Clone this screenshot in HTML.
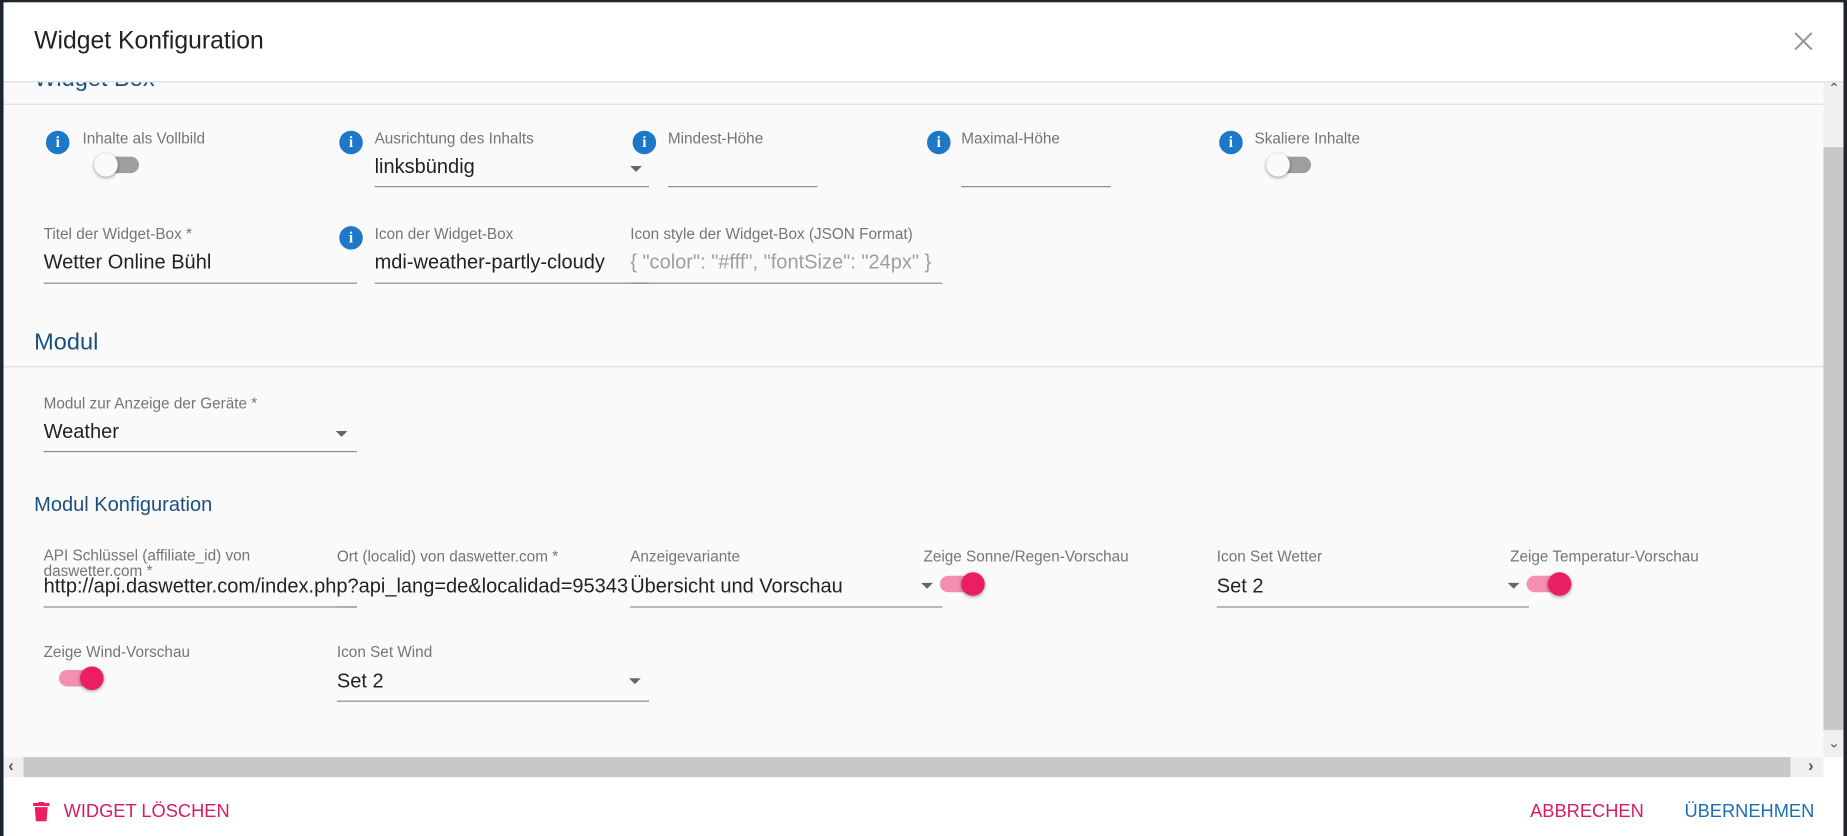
<!DOCTYPE html>
<html><head><meta charset="utf-8"><style>
html,body{margin:0;padding:0;width:1847px;height:836px;overflow:hidden;background:#1c2530;}
#w{position:absolute;left:0;top:0;width:1568px;height:710px;transform:scale(1.17793,1.17746);transform-origin:0 0;font-family:"Liberation Sans",sans-serif;}
.a{position:absolute;white-space:nowrap;}
.lbl{font-size:13px;color:#757575;}
.val{font-size:17px;color:#222;}
.ul{position:absolute;height:1px;background:#8a8a8a;}
.info{position:absolute;width:20px;height:20px;border-radius:50%;background:#1e78c8;color:#fff;font:bold 13px "Liberation Serif",serif;text-align:center;line-height:20px;}
.arr{position:absolute;width:0;height:0;border-left:5px solid transparent;border-right:5px solid transparent;border-top:5px solid #666;}
.soff{position:absolute;width:36px;height:14px;border-radius:7px;background:#9e9e9e;}
.soff::after{content:"";position:absolute;left:-2px;top:-3px;width:20px;height:20px;border-radius:50%;background:#fafafa;box-shadow:0 1px 3px rgba(0,0,0,.4);}
.son{position:absolute;width:36px;height:14px;border-radius:7px;background:#f48fb1;}
.son::after{content:"";position:absolute;left:18px;top:-3px;width:20px;height:20px;border-radius:50%;background:#e91e63;box-shadow:0 1px 3px rgba(0,0,0,.4);}
.h{color:#1b4f7e;}
</style></head><body><div id="w">
<div class="a" style="left:3px;top:2px;width:1562px;height:708px;background:#fff;border-radius:3px 3px 0 0;"></div>
<div class="a" style="left:3px;top:70px;width:1545px;height:573px;background:#fafafa;overflow:hidden;">
  <div class="a h" style="left:26px;top:-14px;font-size:20px;">Widget Box</div>
  <div class="a" style="left:0;top:18px;width:1545px;height:1px;background:#ddd;"></div>
</div>
<div class="a" style="left:3px;top:2px;width:1562px;height:67px;background:#fff;border-bottom:1px solid #ddd;"></div>
<div class="a" style="left:29px;top:23px;font-size:21px;color:#222;">Widget Konfiguration</div>
<svg class="a" style="left:1523px;top:27px;" width="16" height="16" viewBox="0 0 16 16"><path d="M1 1L15 15M15 1L1 15" stroke="#999" stroke-width="1.8"/></svg>
<div class="a" style="left:1548px;top:70px;width:17px;height:573px;background:#f0f0f0;"></div>
<div class="a" style="left:1548px;top:125px;width:17px;height:495px;background:#c8c8c8;"></div>
<div class="a" style="left:1552px;top:68px;font-size:12px;color:#555;">⌃</div>
<div class="a" style="left:1552px;top:624px;font-size:12px;color:#555;">⌄</div>
<div class="info" style="left:39px;top:111px;">i</div>
<div class="a lbl" style="left:70px;top:110px;">Inhalte als Vollbild</div>
<div class="soff" style="left:82px;top:133px;"></div>
<div class="info" style="left:288px;top:111px;">i</div>
<div class="a lbl" style="left:318px;top:110px;">Ausrichtung des Inhalts</div>
<div class="a val" style="left:318px;top:132px;">linksbündig</div>
<div class="arr" style="left:535px;top:141px;"></div>
<div class="ul" style="left:318px;top:158px;width:233px;"></div>
<div class="info" style="left:537px;top:111px;">i</div>
<div class="a lbl" style="left:567px;top:110px;">Mindest-Höhe</div>
<div class="ul" style="left:567px;top:158px;width:127px;"></div>
<div class="info" style="left:787px;top:111px;">i</div>
<div class="a lbl" style="left:816px;top:110px;">Maximal-Höhe</div>
<div class="ul" style="left:816px;top:158px;width:127px;"></div>
<div class="info" style="left:1035px;top:111px;">i</div>
<div class="a lbl" style="left:1065px;top:110px;">Skaliere Inhalte</div>
<div class="soff" style="left:1077px;top:133px;"></div>
<div class="a lbl" style="left:37px;top:191px;">Titel der Widget-Box *</div>
<div class="a val" style="left:37px;top:213px;">Wetter Online Bühl</div>
<div class="ul" style="left:37px;top:240px;width:266px;"></div>
<div class="info" style="left:288px;top:192px;">i</div>
<div class="a lbl" style="left:318px;top:191px;">Icon der Widget-Box</div>
<div class="a val" style="left:318px;top:213px;">mdi-weather-partly-cloudy</div>
<div class="ul" style="left:318px;top:240px;width:233px;"></div>
<div class="a lbl" style="left:535px;top:191px;">Icon style der Widget-Box (JSON Format)</div>
<div class="a val" style="left:535px;top:213px;color:#9e9e9e;">{ "color": "#fff", "fontSize": "24px" }</div>
<div class="ul" style="left:535px;top:240px;width:265px;"></div>
<div class="a h" style="left:29px;top:280px;font-size:20px;">Modul</div>
<div class="a" style="left:3px;top:311px;width:1545px;height:1px;background:#ddd;"></div>
<div class="a lbl" style="left:37px;top:335px;">Modul zur Anzeige der Geräte *</div>
<div class="a val" style="left:37px;top:357px;">Weather</div>
<div class="arr" style="left:285px;top:366px;"></div>
<div class="ul" style="left:37px;top:383px;width:266px;"></div>
<div class="a h" style="left:29px;top:419px;font-size:17px;">Modul Konfiguration</div>
<div class="a lbl" style="left:37px;top:465px;line-height:13px;white-space:normal;width:230px;">API Schlüssel (affiliate_id) von daswetter.com *</div>
<div class="a val" style="left:37px;top:488px;">http://api.daswetter.com/index.php?api_lang=de&amp;localidad=95343</div>
<div class="ul" style="left:37px;top:515px;width:266px;"></div>
<div class="a lbl" style="left:286px;top:465px;">Ort (localid) von daswetter.com *</div>
<div class="ul" style="left:286px;top:515px;width:17px;"></div>
<div class="a lbl" style="left:535px;top:465px;">Anzeigevariante</div>
<div class="a val" style="left:535px;top:488px;background:#fafafa;">Übersicht und Vorschau</div>
<div class="arr" style="left:782px;top:495px;"></div>
<div class="ul" style="left:535px;top:515px;width:265px;"></div>
<div class="a lbl" style="left:784px;top:465px;">Zeige Sonne/Regen-Vorschau</div>
<div class="son" style="left:798px;top:489px;"></div>
<div class="a lbl" style="left:1033px;top:465px;">Icon Set Wetter</div>
<div class="a val" style="left:1033px;top:488px;">Set 2</div>
<div class="arr" style="left:1280px;top:495px;"></div>
<div class="ul" style="left:1033px;top:515px;width:265px;"></div>
<div class="a lbl" style="left:1282px;top:465px;">Zeige Temperatur-Vorschau</div>
<div class="son" style="left:1296px;top:489px;"></div>
<div class="a lbl" style="left:37px;top:546px;">Zeige Wind-Vorschau</div>
<div class="son" style="left:50px;top:569px;"></div>
<div class="a lbl" style="left:286px;top:546px;">Icon Set Wind</div>
<div class="a val" style="left:286px;top:569px;">Set 2</div>
<div class="arr" style="left:534px;top:576px;"></div>
<div class="ul" style="left:286px;top:595px;width:265px;"></div>
<div class="a" style="left:3px;top:643px;width:1545px;height:17px;background:#f0f0f0;"></div>
<div class="a" style="left:20px;top:643px;width:1500px;height:17px;background:#c8c8c8;"></div>
<div class="a" style="left:7px;top:642px;font-size:14px;color:#555;font-weight:bold;">‹</div>
<div class="a" style="left:1535px;top:642px;font-size:14px;color:#555;font-weight:bold;">›</div>
<svg class="a" style="left:28px;top:681px;" width="14" height="17" viewBox="0 0 14 17"><rect x="0" y="1" width="14" height="2.5" fill="#e91e63"/><rect x="4.5" y="0" width="5" height="2" fill="#e91e63"/><path d="M1.5 4.5h11l-1 12h-9z" fill="#e91e63"/></svg>
<div class="a" style="left:54px;top:681px;font-size:15.5px;color:#d81b60;">WIDGET LÖSCHEN</div>
<div class="a" style="left:1299px;top:681px;font-size:15.5px;color:#d81b60;">ABBRECHEN</div>
<div class="a" style="left:1430px;top:681px;font-size:15.5px;color:#1a6fb4;">ÜBERNEHMEN</div>
</div></body></html>
